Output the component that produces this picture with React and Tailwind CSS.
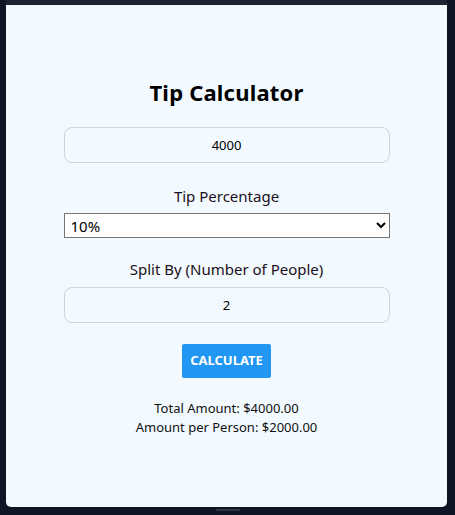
export default function App() {
    return (
        <div className="h-[515px] w-[455px] bg-[#0f1524] flex flex-col overflow-hidden" style={{ fontFamily: '"Noto Sans", "Open Sans", sans-serif' }}>
            {/* top strip */}
            <div className="h-[5px] bg-[#1e2333] mr-[8px] ml-[6px]" />
            <div className="flex-1 flex pl-[6px] pr-[8px]">
                <div className="flex-1 bg-[#f3faff] rounded-b-[5px] flex flex-col items-center pt-[71px]">
                    <h1 className="text-[22px] font-bold text-black leading-[32px] tracking-[0.2px]">Tip Calculator</h1>

                    <div className="w-[326px] mt-[19px] flex flex-col items-center">
                        <input
                            type="text"
                            inputMode="numeric"
                            defaultValue="4000"
                            className="w-full h-[36px] rounded-[8px] border border-[#cfd4d9] bg-transparent text-center text-[13px] text-black outline-none"
                        />

                        <label className="mt-[22px] text-[15px] text-[#1a1020] leading-[22px]">Tip Percentage</label>
                        <select
                            defaultValue="10"
                            className="mt-[6px] w-full h-[25px] border border-[#767676] bg-white text-[15px] text-black pl-[2px]"
                        >
                            <option value="5">5%</option>
                            <option value="10">10%</option>
                            <option value="15">15%</option>
                            <option value="20">20%</option>
                        </select>

                        <label className="mt-[20px] text-[15px] text-[#1a1020] leading-[22px]">Split By (Number of People)</label>
                        <input
                            type="text"
                            inputMode="numeric"
                            defaultValue="2"
                            className="mt-[7px] w-full h-[36px] rounded-[8px] border border-[#cfd4d9] bg-transparent text-center text-[13px] text-black outline-none"
                        />

                        <button
                            type="button"
                            className="mt-[21px] w-[89px] h-[34px] bg-[#2196f3] text-white text-[13px] font-bold rounded-[2px]"
                        >
                            CALCULATE
                        </button>

                        <div className="mt-[21px] text-[13px] text-[#111] leading-[19px] text-center">
                            <p>Total Amount: $4000.00</p>
                            <p>Amount per Person: $2000.00</p>
                        </div>
                    </div>
                </div>
            </div>
            {/* bottom strip */}
            <div className="h-[8px] flex justify-center pt-[2px]">
                <div className="w-[24px] h-[2px] bg-[#2e3346] rounded-full" />
            </div>
        </div>
    );
}
